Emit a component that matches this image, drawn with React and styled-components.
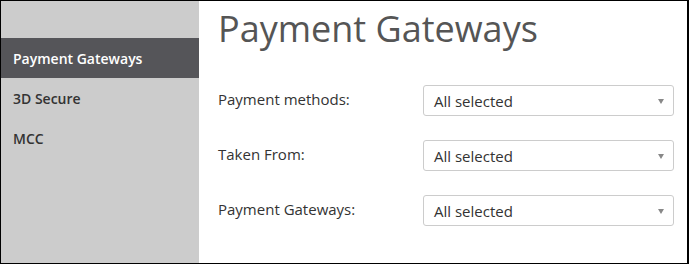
import React from "react";
import styled, { createGlobalStyle } from "styled-components";

const GlobalStyle = createGlobalStyle`
  html, body {
    margin: 0;
    padding: 0;
    background: #fff;
  }
  body {
    font-family: "Open Sans", "Liberation Sans", sans-serif;
  }
`;

const Frame = styled.div`
  box-sizing: border-box;
  width: 689px;
  height: 264px;
  border: 1px solid #000;
  border-right-width: 2px;
  display: flex;
  overflow: hidden;
`;

const Sidebar = styled.nav`
  width: 198px;
  flex-shrink: 0;
  background: #cccccc;
  padding-top: 37px;
  display: flex;
  flex-direction: column;
`;

const NavItem = styled.div`
  height: 40px;
  display: flex;
  align-items: center;
  padding-left: 12px;
  font-size: 14px;
  font-weight: 600;
  color: ${(p) => (p.$active ? "#ffffff" : "#333333")};
  background: ${(p) => (p.$active ? "#555559" : "transparent")};
`;

const Main = styled.main`
  flex: 1;
  padding: 4px 0 0 19px;
`;

const Title = styled.h1`
  margin: 0 0 32px;
  font-size: 36px;
  font-weight: 400;
  color: #555555;
  line-height: 48px;
`;

const Form = styled.div`
  display: flex;
  flex-direction: column;
  gap: 24px;
`;

const Row = styled.div`
  display: grid;
  grid-template-columns: 205px 251px;
  align-items: center;
`;

const Label = styled.label`
  font-size: 15px;
  color: #333333;
  padding-bottom: 3px;
`;

const Select = styled.div`
  box-sizing: border-box;
  height: 31px;
  border: 1px solid #cccccc;
  border-radius: 3px;
  display: flex;
  align-items: center;
  justify-content: space-between;
  padding: 0 9px 0 10px;
  font-size: 15px;
  color: #333333;
`;

const Caret = styled.span`
  width: 0;
  height: 0;
  border-left: 3.5px solid transparent;
  border-right: 3.5px solid transparent;
  border-top: 5px solid #888888;
  margin-top: 2px;
`;

const nav = ["Payment Gateways", "3D Secure", "MCC"];
const fields = ["Payment methods:", "Taken From:", "Payment Gateways:"];

export default function App() {
  return (
    <>
      <GlobalStyle />
      <Frame>
        <Sidebar>
          {nav.map((n, i) => (
            <NavItem key={n} $active={i === 0}>
              {n}
            </NavItem>
          ))}
        </Sidebar>
        <Main>
          <Title>Payment Gateways</Title>
          <Form>
            {fields.map((f) => (
              <Row key={f}>
                <Label>{f}</Label>
                <Select>
                  All selected
                  <Caret />
                </Select>
              </Row>
            ))}
          </Form>
        </Main>
      </Frame>
    </>
  );
}
